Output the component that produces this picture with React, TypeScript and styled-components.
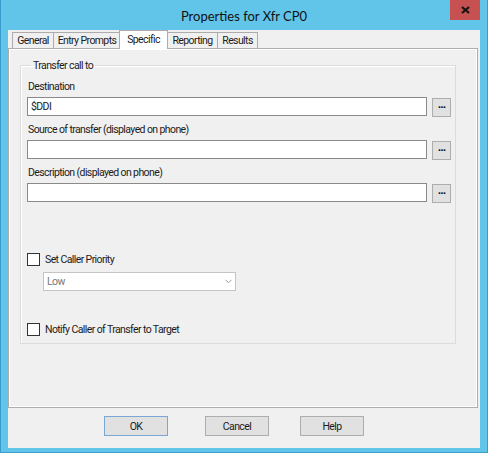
import styled, { createGlobalStyle } from 'styled-components';

const GlobalStyle = createGlobalStyle`
	html,
	body {
		margin: 0;
		padding: 0;
		width: 488px;
		height: 453px;
		overflow: hidden;
		background: #61c5ea;
	}
	body {
		font-family: Roboto, 'Liberation Sans', Arial, sans-serif;
		font-size: 10.5px;
		letter-spacing: -0.6px;
		color: #1b1b1b;
	}
`;

const Window = styled.div`
	box-sizing: border-box;
	width: 488px;
	height: 453px;
	display: flex;
	flex-direction: column;
	background: #61c5ea;
	border: 1px solid #3a9ccd;
	border-top: none;
	padding: 0 7px 4px 7px;
`;

const TitleBar = styled.div`
	height: 30px;
	display: grid;
	grid-template-columns: 1fr auto 1fr;
	align-items: center;
`;

const Title = styled.div`
	grid-column: 2;
	font-family: Lato, 'Liberation Sans', sans-serif;
	font-size: 13px;
	letter-spacing: 0;
	color: #111;
	padding-top: 1px;
`;

const CloseButton = styled.button`
	grid-column: 3;
	justify-self: end;
	align-self: start;
	width: 30px;
	height: 20px;
	padding: 0;
	border: none;
	background: #c75050;
	display: flex;
	align-items: center;
	justify-content: center;
`;

const Client = styled.div`
	flex: 1;
	display: flex;
	flex-direction: column;
	background: #f0f0f0;
`;

const TabRow = styled.div`
	height: 18px;
	display: flex;
	align-items: flex-end;
	padding-left: 4px;
	position: relative;
	z-index: 1;
`;

const Tab = styled.div<{ $active?: boolean; $width: number }>`
	box-sizing: border-box;
	width: ${(p) => p.$width}px;
	height: ${(p) => (p.$active ? '19px' : '16px')};
	margin: ${(p) => (p.$active ? '0 -1px -1px -1px' : '0 -1px 0 0')};
	padding-top: ${(p) => (p.$active ? '2px' : '1px')};
	border: 1px solid #acacac;
	border-bottom: none;
	background: ${(p) => (p.$active ? '#ffffff' : '#f0f0f0')};
	position: relative;
	z-index: ${(p) => (p.$active ? 2 : 0)};
	line-height: 13px;
	text-align: center;
	white-space: nowrap;
`;

const Panel = styled.div`
	flex: 1;
	box-sizing: border-box;
	margin-right: 2px;
	border: 1px solid #adadad;
	box-shadow: inset 1px 1px 0 #ffffff, inset -1px -1px 0 #ffffff;
	padding: 10px 21px 0 11px;
`;

const Group = styled.fieldset`
	margin: 0;
	padding: 8px 4px 7px 6px;
	border: 1px solid #dcdcdc;
	box-shadow: inset 1px 1px 0 #ffffff;
	min-width: 0;
`;

const Legend = styled.legend`
	margin-left: 4px;
	padding: 0 2px;
	line-height: 13px;
`;

const Field = styled.div`
	& + & {
		margin-top: 6px;
	}
`;

const FieldLabel = styled.div`
	line-height: 14px;
	margin-bottom: 3px;
	padding-left: 1px;
`;

const InputRow = styled.div`
	display: flex;
	gap: 5px;
`;

const TextBox = styled.div`
	flex: 1;
	box-sizing: border-box;
	height: 19px;
	border: 1px solid #8a8a8a;
	background: #fff;
	padding: 0 3px;
	line-height: 17px;
`;

const BrowseButton = styled.button`
	box-sizing: border-box;
	width: 19px;
	height: 19px;
	margin-top: 1px;
	padding: 0;
	border: 1px solid #adadad;
	background: #e1e1e1;
	font-family: 'DejaVu Sans', sans-serif;
	font-size: 9px;
	font-weight: bold;
	letter-spacing: -1px;
	line-height: 15px;
	color: #111;
`;

const CheckRow = styled.label<{ $gap: number }>`
	display: flex;
	align-items: center;
	gap: 5px;
	height: 14px;
	margin-top: ${(p) => p.$gap}px;
`;

const CheckBox = styled.span`
	box-sizing: border-box;
	width: 13px;
	height: 13px;
	border: 1px solid #333;
	background: #fff;
`;

const Select = styled.div`
	box-sizing: border-box;
	width: 193px;
	height: 19px;
	margin: 6px 0 0 16px;
	border: 1px solid #c4c4c4;
	background: #fff;
	color: #777;
	display: flex;
	align-items: center;
	justify-content: space-between;
	padding: 0 3px 0 3px;
`;

const Footer = styled.div`
	height: 40px;
	box-sizing: border-box;
	padding: 8px 0 0 96px;
	display: flex;
	align-items: flex-start;
`;

const DialogButton = styled.button<{ $default?: boolean; $gap?: number }>`
	box-sizing: border-box;
	width: 64px;
	height: 20px;
	margin-left: ${(p) => p.$gap ?? 0}px;
	padding: 0;
	border: 1px solid ${(p) => (p.$default ? '#7aa7d4' : '#adadad')};
	background: #e1e1e1;
	font: inherit;
	letter-spacing: inherit;
	color: #1b1b1b;
`;

const tabs = [
	{ name: 'General', width: 42 },
	{ name: 'Entry Prompts', width: 68 },
	{ name: 'Specific', width: 49, active: true },
	{ name: 'Reporting', width: 51 },
	{ name: 'Results', width: 41 },
];

function Chevron() {
	return (
		<svg width="7" height="5" viewBox="0 0 7 5">
			<polyline points="0.5,0.8 3.5,3.8 6.5,0.8" fill="none" stroke="#9a9a9a" strokeWidth="1" />
		</svg>
	);
}

function TextField({ label, value }: { label: string; value?: string }) {
	return (
		<Field>
			<FieldLabel>{label}</FieldLabel>
			<InputRow>
				<TextBox>{value}</TextBox>
				<BrowseButton>···</BrowseButton>
			</InputRow>
		</Field>
	);
}

export default function App() {
	return (
		<>
			<GlobalStyle />
			<Window>
				<TitleBar>
					<Title>Properties for Xfr CP0</Title>
					<CloseButton title="Close">
						<svg width="9" height="8" viewBox="0 0 9 8">
							<path d="M1 1 L8 7 M8 1 L1 7" stroke="#141414" strokeWidth="2.2" />
						</svg>
					</CloseButton>
				</TitleBar>
				<Client>
					<TabRow>
						{tabs.map((t) => (
							<Tab key={t.name} $width={t.width} $active={t.active}>
								{t.name}
							</Tab>
						))}
					</TabRow>
					<Panel>
						<Group>
							<Legend>Transfer call to</Legend>
							<TextField label="Destination" value="$DDI" />
							<TextField label="Source of transfer (displayed on phone)" />
							<TextField label="Description (displayed on phone)" />
							<CheckRow $gap={49}>
								<CheckBox />
								Set Caller Priority
							</CheckRow>
							<Select>
								Low
								<Chevron />
							</Select>
							<CheckRow $gap={31}>
								<CheckBox />
								Notify Caller of Transfer to Target
							</CheckRow>
						</Group>
					</Panel>
					<Footer>
						<DialogButton $default>OK</DialogButton>
						<DialogButton $gap={37}>Cancel</DialogButton>
						<DialogButton $gap={31}>Help</DialogButton>
					</Footer>
				</Client>
			</Window>
		</>
	);
}
